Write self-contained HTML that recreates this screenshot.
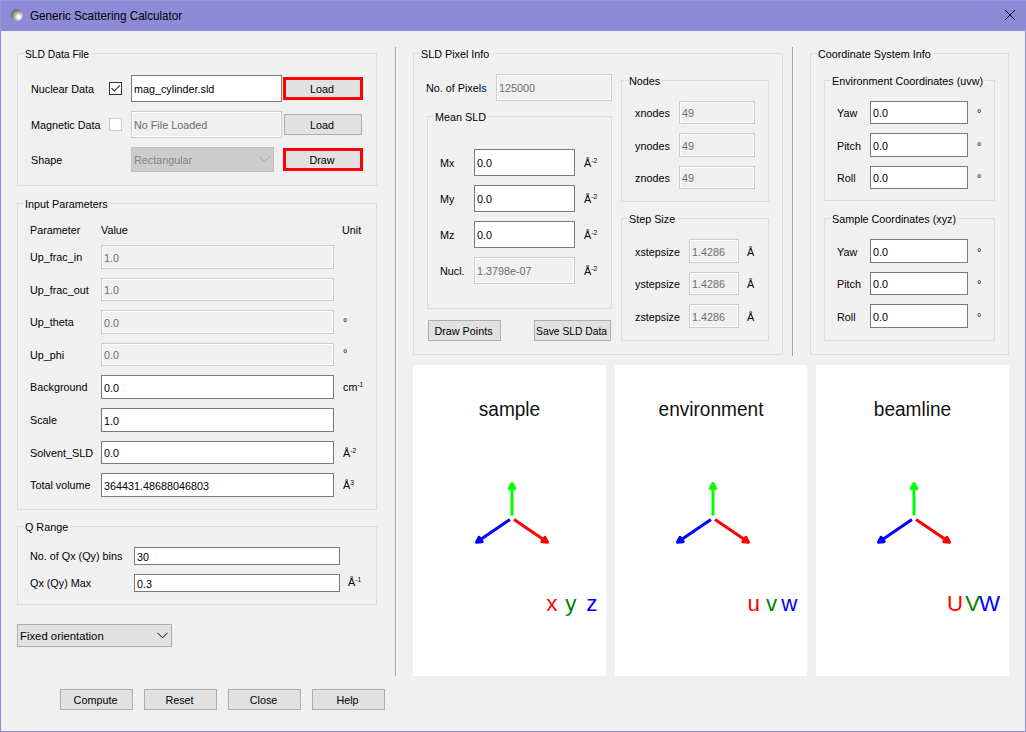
<!DOCTYPE html>
<html><head><meta charset="utf-8"><title>Generic Scattering Calculator</title>
<style>
html,body{margin:0;padding:0;}
body{width:1026px;height:732px;position:relative;overflow:hidden;background:#f0f0f0;font-family:"Liberation Sans",sans-serif;}
.r{position:absolute;box-sizing:border-box;}
.t{position:absolute;white-space:nowrap;line-height:1;}
.gt{background:#f0f0f0;padding:0 2px 0 1px;}
.sup{font-size:0.62em;vertical-align:0.55em;}
</style></head><body>
<div class="r" style="left:0;top:0;width:1026px;height:31px;background:#8d8bd8"></div>
<div class="r" style="left:0;top:0;width:1026px;height:1px;background:#9896d9"></div>
<div class="r" style="left:0;top:0;width:1px;height:31px;background:#9896d9"></div>
<div class="r" style="left:0;top:31px;width:1px;height:701px;background:#8e8cd8"></div>
<div class="r" style="left:1025px;top:31px;width:1px;height:701px;background:#8e8cd8"></div>
<div class="r" style="left:0;top:731px;width:1026px;height:1px;background:#8e8cd8"></div>
<div class="r" style="left:11px;top:9px;width:12px;height:12px;border-radius:50%;background:radial-gradient(circle at 66% 66%, #fff 0, #f8f8f8 14%, #9a9a9a 48%, #5a5a5a 80%, #3a3a3a 100%)"></div>
<div class="t" style="left:30px;top:10.23px;font-size:12.6px;color:#000;transform:scaleX(0.925);transform-origin:0 0;">Generic Scattering Calculator</div>
<svg class="r" style="left:1004px;top:9px" width="12" height="12"><path d="M1,1 L11,11 M11,1 L1,11" stroke="#000" stroke-width="1"/></svg>
<div class="r" style="left:17px;top:53px;width:360px;height:133px;border:1px solid #dcdcdc;"></div>
<div class="t gt" style="left:24px;top:48.82px;font-size:11.2px;transform:scaleX(0.9206);transform-origin:0 0;">&#8203;SLD Data File</div>
<div class="t" style="left:30.5px;top:83.52px;font-size:11.2px;color:#000;transform:scaleX(0.964);transform-origin:0 0;">Nuclear Data</div>
<div class="r" style="left:109px;top:82px;width:13px;height:13px;background:#fff;border:1px solid #333333;"></div>
<svg class="r" style="left:109px;top:82px" width="13" height="13"><polyline points="2.5,6.2 5.3,9 10.8,3.4" fill="none" stroke="#222" stroke-width="1.05"/></svg>
<div class="r" style="left:131px;top:75px;width:151px;height:27px;background:#fff;border:1px solid #7a7a7a;"></div>
<div class="t" style="left:133.5px;top:84.22px;font-size:11.2px;color:#000;transform:scaleX(0.964);transform-origin:0 0;">mag_cylinder.sld</div>
<div class="r" style="left:283px;top:77px;width:80px;height:23px;background:#e1e1e1;border:3px solid #ff0000;"></div>
<div class="t" style="left:281.5px;width:80px;text-align:center;top:84.22px;font-size:11.2px;transform:scaleX(0.9640);">Load</div>
<div class="t" style="left:30.5px;top:119.52px;font-size:11.2px;color:#000;transform:scaleX(0.964);transform-origin:0 0;">Magnetic Data</div>
<div class="r" style="left:109px;top:118px;width:13px;height:13px;background:#fff;border:1px solid #cccccc;"></div>
<div class="r" style="left:131px;top:111px;width:151px;height:27px;background:#f0f0f0;border:1px solid #cccccc;box-shadow:inset 0 0 0 1px #fff;"></div>
<div class="t" style="left:133.5px;top:120.22px;font-size:11.2px;color:#6d6d6d;transform:scaleX(0.964);transform-origin:0 0;">No File Loaded</div>
<div class="r" style="left:284px;top:114px;width:78px;height:21px;background:#e1e1e1;border:1px solid #adadad;"></div>
<div class="t" style="left:282.5px;width:78px;text-align:center;top:120.22px;font-size:11.2px;transform:scaleX(0.9640);">Load</div>
<div class="t" style="left:30.5px;top:154.52px;font-size:11.2px;color:#000;transform:scaleX(0.964);transform-origin:0 0;">Shape</div>
<div class="r" style="left:131px;top:147px;width:143px;height:25px;background:#cccccc;border:1px solid #bfbfbf;"></div>
<div class="t" style="left:134px;top:155.22px;font-size:11.2px;color:#838383;transform:scaleX(0.9640);transform-origin:0 0;">Rectangular</div>
<svg class="r" style="left:258.5px;top:156.0px" width="11" height="7"><polyline points="0.5,0.8 5.5,5.8 10.5,0.8" fill="none" stroke="#a0a0a0" stroke-width="1"/></svg>
<div class="r" style="left:283px;top:148px;width:80px;height:23px;background:#e1e1e1;border:3px solid #ff0000;"></div>
<div class="t" style="left:281.5px;width:80px;text-align:center;top:155.22px;font-size:11.2px;transform:scaleX(0.9640);">Draw</div>
<div class="r" style="left:17px;top:203px;width:360px;height:307px;border:1px solid #dcdcdc;"></div>
<div class="t gt" style="left:24px;top:198.82px;font-size:11.2px;transform:scaleX(0.9640);transform-origin:0 0;">&#8203;Input Parameters</div>
<div class="t" style="left:30px;top:224.52px;font-size:11.2px;color:#000;transform:scaleX(0.964);transform-origin:0 0;">Parameter</div>
<div class="t" style="left:101px;top:224.52px;font-size:11.2px;color:#000;transform:scaleX(0.964);transform-origin:0 0;">Value</div>
<div class="t" style="left:342px;top:224.52px;font-size:11.2px;color:#000;transform:scaleX(0.964);transform-origin:0 0;">Unit</div>
<div class="t" style="left:30px;top:252.32px;font-size:11.2px;color:#000;transform:scaleX(0.964);transform-origin:0 0;">Up_frac_in</div>
<div class="r" style="left:101px;top:245px;width:233px;height:24px;background:#f0f0f0;border:1px solid #cccccc;box-shadow:inset 0 0 0 1px #fff;"></div>
<div class="t" style="left:103.5px;top:252.72px;font-size:11.2px;color:#6d6d6d;transform:scaleX(0.964);transform-origin:0 0;">1.0</div>
<div class="t" style="left:30px;top:284.82px;font-size:11.2px;color:#000;transform:scaleX(0.964);transform-origin:0 0;">Up_frac_out</div>
<div class="r" style="left:101px;top:278px;width:233px;height:23px;background:#f0f0f0;border:1px solid #cccccc;box-shadow:inset 0 0 0 1px #fff;"></div>
<div class="t" style="left:103.5px;top:285.22px;font-size:11.2px;color:#6d6d6d;transform:scaleX(0.964);transform-origin:0 0;">1.0</div>
<div class="t" style="left:30px;top:317.32px;font-size:11.2px;color:#000;transform:scaleX(0.964);transform-origin:0 0;">Up_theta</div>
<div class="r" style="left:101px;top:310px;width:233px;height:24px;background:#f0f0f0;border:1px solid #cccccc;box-shadow:inset 0 0 0 1px #fff;"></div>
<div class="t" style="left:103.5px;top:317.72px;font-size:11.2px;color:#6d6d6d;transform:scaleX(0.964);transform-origin:0 0;">0.0</div>
<div class="t" style="left:343px;top:317.32px;font-size:11.2px;color:#000;transform:scaleX(0.964);transform-origin:0 0;">°</div>
<div class="t" style="left:30px;top:349.82px;font-size:11.2px;color:#000;transform:scaleX(0.964);transform-origin:0 0;">Up_phi</div>
<div class="r" style="left:101px;top:343px;width:233px;height:23px;background:#f0f0f0;border:1px solid #cccccc;box-shadow:inset 0 0 0 1px #fff;"></div>
<div class="t" style="left:103.5px;top:350.22px;font-size:11.2px;color:#6d6d6d;transform:scaleX(0.964);transform-origin:0 0;">0.0</div>
<div class="t" style="left:343px;top:347.82px;font-size:11.2px;color:#000;transform:scaleX(0.964);transform-origin:0 0;">°</div>
<div class="t" style="left:30px;top:382.32px;font-size:11.2px;color:#000;transform:scaleX(0.964);transform-origin:0 0;">Background</div>
<div class="r" style="left:101px;top:375px;width:233px;height:24px;background:#fff;border:1px solid #7a7a7a;"></div>
<div class="t" style="left:103.5px;top:382.72px;font-size:11.2px;color:#000;transform:scaleX(0.964);transform-origin:0 0;">0.0</div>
<div class="t" style="left:343px;top:382.32px;font-size:11.2px;transform:scaleX(0.964);transform-origin:0 0;">cm<span class="sup">-1</span></div>
<div class="t" style="left:30px;top:415.32px;font-size:11.2px;color:#000;transform:scaleX(0.964);transform-origin:0 0;">Scale</div>
<div class="r" style="left:101px;top:408px;width:233px;height:24px;background:#fff;border:1px solid #7a7a7a;"></div>
<div class="t" style="left:103.5px;top:415.72px;font-size:11.2px;color:#000;transform:scaleX(0.964);transform-origin:0 0;">1.0</div>
<div class="t" style="left:30px;top:447.82px;font-size:11.2px;color:#000;transform:scaleX(0.964);transform-origin:0 0;">Solvent_SLD</div>
<div class="r" style="left:101px;top:441px;width:233px;height:23px;background:#fff;border:1px solid #7a7a7a;"></div>
<div class="t" style="left:103.5px;top:448.22px;font-size:11.2px;color:#000;transform:scaleX(0.964);transform-origin:0 0;">0.0</div>
<div class="t" style="left:343px;top:447.82px;font-size:11.2px;transform:scaleX(0.964);transform-origin:0 0;">Å<span class="sup">-2</span></div>
<div class="t" style="left:30px;top:480.32px;font-size:11.2px;color:#000;transform:scaleX(0.964);transform-origin:0 0;">Total volume</div>
<div class="r" style="left:101px;top:473px;width:233px;height:24px;background:#fff;border:1px solid #7a7a7a;"></div>
<div class="t" style="left:103.5px;top:480.72px;font-size:11.2px;color:#000;transform:scaleX(0.964);transform-origin:0 0;">364431.48688046803</div>
<div class="t" style="left:343px;top:480.32px;font-size:11.2px;transform:scaleX(0.964);transform-origin:0 0;">Å<span class="sup">3</span></div>
<div class="r" style="left:17px;top:526px;width:360px;height:79px;border:1px solid #dcdcdc;"></div>
<div class="t gt" style="left:24px;top:521.82px;font-size:11.2px;transform:scaleX(0.9640);transform-origin:0 0;">&#8203;Q Range</div>
<div class="t" style="left:30.3px;top:551.22px;font-size:11.2px;color:#000;transform:scaleX(0.964);transform-origin:0 0;">No. of Qx (Qy) bins</div>
<div class="r" style="left:134px;top:547px;width:206px;height:18px;background:#fff;border:1px solid #7a7a7a;"></div>
<div class="t" style="left:136.5px;top:551.72px;font-size:11.2px;color:#000;transform:scaleX(0.964);transform-origin:0 0;">30</div>
<div class="t" style="left:30.3px;top:578.22px;font-size:11.2px;color:#000;transform:scaleX(0.964);transform-origin:0 0;">Qx (Qy) Max</div>
<div class="r" style="left:134px;top:574px;width:206px;height:18px;background:#fff;border:1px solid #7a7a7a;"></div>
<div class="t" style="left:136.5px;top:578.72px;font-size:11.2px;color:#000;transform:scaleX(0.964);transform-origin:0 0;">0.3</div>
<div class="t" style="left:348px;top:576.52px;font-size:11.2px;transform:scaleX(0.964);transform-origin:0 0;">Å<span class="sup">-1</span></div>
<div class="r" style="left:17px;top:624px;width:155px;height:23px;background:#e1e1e1;border:1px solid #adadad;"></div>
<div class="t" style="left:20px;top:631.22px;font-size:11.2px;color:#000;transform:scaleX(1.0122);transform-origin:0 0;">Fixed orientation</div>
<svg class="r" style="left:156.5px;top:632.0px" width="11" height="7"><polyline points="0.5,0.8 5.5,5.8 10.5,0.8" fill="none" stroke="#000" stroke-width="1"/></svg>
<div class="r" style="left:60px;top:689px;width:73px;height:21px;background:#e1e1e1;border:1px solid #adadad;"></div>
<div class="t" style="left:58.5px;width:73px;text-align:center;top:695.22px;font-size:11.2px;transform:scaleX(0.9640);">Compute</div>
<div class="r" style="left:144px;top:689px;width:73px;height:21px;background:#e1e1e1;border:1px solid #adadad;"></div>
<div class="t" style="left:142.5px;width:73px;text-align:center;top:695.22px;font-size:11.2px;transform:scaleX(0.9640);">Reset</div>
<div class="r" style="left:228px;top:689px;width:73px;height:21px;background:#e1e1e1;border:1px solid #adadad;"></div>
<div class="t" style="left:226.5px;width:73px;text-align:center;top:695.22px;font-size:11.2px;transform:scaleX(0.9640);">Close</div>
<div class="r" style="left:312px;top:689px;width:73px;height:21px;background:#e1e1e1;border:1px solid #adadad;"></div>
<div class="t" style="left:310.5px;width:73px;text-align:center;top:695.22px;font-size:11.2px;transform:scaleX(0.9640);">Help</div>
<div class="r" style="left:395px;top:47px;width:1px;height:629px;background:#a0a0a0;"></div>
<div class="r" style="left:396px;top:48px;width:1px;height:628px;background:#ffffff;"></div>
<div class="r" style="left:792px;top:47px;width:1px;height:309px;background:#a0a0a0;"></div>
<div class="r" style="left:793px;top:48px;width:1px;height:308px;background:#ffffff;"></div>
<div class="r" style="left:413px;top:53px;width:370px;height:302px;border:1px solid #dcdcdc;"></div>
<div class="t gt" style="left:420px;top:48.82px;font-size:11.2px;transform:scaleX(0.9640);transform-origin:0 0;">&#8203;SLD Pixel Info</div>
<div class="t" style="left:426px;top:82.52px;font-size:11.2px;color:#000;transform:scaleX(0.964);transform-origin:0 0;">No. of Pixels</div>
<div class="r" style="left:496px;top:74px;width:116px;height:27px;background:#f0f0f0;border:1px solid #cccccc;box-shadow:inset 0 0 0 1px #fff;"></div>
<div class="t" style="left:498.5px;top:83.22px;font-size:11.2px;color:#6d6d6d;transform:scaleX(0.964);transform-origin:0 0;">125000</div>
<div class="r" style="left:427px;top:116px;width:185px;height:193px;border:1px solid #dcdcdc;"></div>
<div class="t gt" style="left:434px;top:111.82px;font-size:11.2px;transform:scaleX(0.9640);transform-origin:0 0;">&#8203;Mean SLD</div>
<div class="t" style="left:440px;top:158.02px;font-size:11.2px;color:#000;transform:scaleX(0.964);transform-origin:0 0;">Mx</div>
<div class="r" style="left:474px;top:149px;width:101px;height:27px;background:#fff;border:1px solid #7a7a7a;"></div>
<div class="t" style="left:476.5px;top:158.22px;font-size:11.2px;color:#000;transform:scaleX(0.964);transform-origin:0 0;">0.0</div>
<div class="t" style="left:584px;top:158.02px;font-size:11.2px;transform:scaleX(0.964);transform-origin:0 0;">Å<span class="sup">-2</span></div>
<div class="t" style="left:440px;top:194.02px;font-size:11.2px;color:#000;transform:scaleX(0.964);transform-origin:0 0;">My</div>
<div class="r" style="left:474px;top:185px;width:101px;height:27px;background:#fff;border:1px solid #7a7a7a;"></div>
<div class="t" style="left:476.5px;top:194.22px;font-size:11.2px;color:#000;transform:scaleX(0.964);transform-origin:0 0;">0.0</div>
<div class="t" style="left:584px;top:194.02px;font-size:11.2px;transform:scaleX(0.964);transform-origin:0 0;">Å<span class="sup">-2</span></div>
<div class="t" style="left:440px;top:230.02px;font-size:11.2px;color:#000;transform:scaleX(0.964);transform-origin:0 0;">Mz</div>
<div class="r" style="left:474px;top:221px;width:101px;height:27px;background:#fff;border:1px solid #7a7a7a;"></div>
<div class="t" style="left:476.5px;top:230.22px;font-size:11.2px;color:#000;transform:scaleX(0.964);transform-origin:0 0;">0.0</div>
<div class="t" style="left:584px;top:230.02px;font-size:11.2px;transform:scaleX(0.964);transform-origin:0 0;">Å<span class="sup">-2</span></div>
<div class="t" style="left:440px;top:266.02px;font-size:11.2px;color:#000;transform:scaleX(0.964);transform-origin:0 0;">Nucl.</div>
<div class="r" style="left:474px;top:257px;width:101px;height:27px;background:#f0f0f0;border:1px solid #cccccc;box-shadow:inset 0 0 0 1px #fff;"></div>
<div class="t" style="left:476.5px;top:266.22px;font-size:11.2px;color:#6d6d6d;transform:scaleX(0.964);transform-origin:0 0;">1.3798e-07</div>
<div class="t" style="left:584px;top:266.02px;font-size:11.2px;transform:scaleX(0.964);transform-origin:0 0;">Å<span class="sup">-2</span></div>
<div class="r" style="left:428px;top:320px;width:73px;height:21px;background:#e1e1e1;border:1px solid #adadad;"></div>
<div class="t" style="left:426.5px;width:73px;text-align:center;top:326.22px;font-size:11.2px;transform:scaleX(0.9640);">Draw Points</div>
<div class="r" style="left:534px;top:320px;width:77px;height:21px;background:#e1e1e1;border:1px solid #adadad;"></div>
<div class="t" style="left:532.5px;width:77px;text-align:center;top:326.22px;font-size:11.2px;transform:scaleX(0.9206);">Save SLD Data</div>
<div class="r" style="left:621px;top:80px;width:148px;height:122px;border:1px solid #dcdcdc;"></div>
<div class="t gt" style="left:628px;top:75.82px;font-size:11.2px;transform:scaleX(0.9640);transform-origin:0 0;">&#8203;Nodes</div>
<div class="t" style="left:635px;top:108.02px;font-size:11.2px;color:#000;transform:scaleX(0.964);transform-origin:0 0;">xnodes</div>
<div class="r" style="left:679px;top:101px;width:76px;height:23px;background:#f0f0f0;border:1px solid #cccccc;box-shadow:inset 0 0 0 1px #fff;"></div>
<div class="t" style="left:681.5px;top:108.22px;font-size:11.2px;color:#6d6d6d;transform:scaleX(0.964);transform-origin:0 0;">49</div>
<div class="t" style="left:635px;top:140.52px;font-size:11.2px;color:#000;transform:scaleX(0.964);transform-origin:0 0;">ynodes</div>
<div class="r" style="left:679px;top:133px;width:76px;height:24px;background:#f0f0f0;border:1px solid #cccccc;box-shadow:inset 0 0 0 1px #fff;"></div>
<div class="t" style="left:681.5px;top:140.72px;font-size:11.2px;color:#6d6d6d;transform:scaleX(0.964);transform-origin:0 0;">49</div>
<div class="t" style="left:635px;top:173.02px;font-size:11.2px;color:#000;transform:scaleX(0.964);transform-origin:0 0;">znodes</div>
<div class="r" style="left:679px;top:166px;width:76px;height:23px;background:#f0f0f0;border:1px solid #cccccc;box-shadow:inset 0 0 0 1px #fff;"></div>
<div class="t" style="left:681.5px;top:173.22px;font-size:11.2px;color:#6d6d6d;transform:scaleX(0.964);transform-origin:0 0;">49</div>
<div class="r" style="left:621px;top:218px;width:148px;height:123px;border:1px solid #dcdcdc;"></div>
<div class="t gt" style="left:628px;top:213.82px;font-size:11.2px;transform:scaleX(0.9640);transform-origin:0 0;">&#8203;Step Size</div>
<div class="t" style="left:635px;top:246.52px;font-size:11.2px;color:#000;transform:scaleX(0.964);transform-origin:0 0;">xstepsize</div>
<div class="r" style="left:689px;top:239px;width:50px;height:24px;background:#f0f0f0;border:1px solid #cccccc;box-shadow:inset 0 0 0 1px #fff;"></div>
<div class="t" style="left:691.5px;top:246.72px;font-size:11.2px;color:#6d6d6d;transform:scaleX(0.964);transform-origin:0 0;">1.4286</div>
<div class="t" style="left:747px;top:246.52px;font-size:11.2px;color:#000;transform:scaleX(0.964);transform-origin:0 0;">Å</div>
<div class="t" style="left:635px;top:279.02px;font-size:11.2px;color:#000;transform:scaleX(0.964);transform-origin:0 0;">ystepsize</div>
<div class="r" style="left:689px;top:272px;width:50px;height:23px;background:#f0f0f0;border:1px solid #cccccc;box-shadow:inset 0 0 0 1px #fff;"></div>
<div class="t" style="left:691.5px;top:279.22px;font-size:11.2px;color:#6d6d6d;transform:scaleX(0.964);transform-origin:0 0;">1.4286</div>
<div class="t" style="left:747px;top:279.02px;font-size:11.2px;color:#000;transform:scaleX(0.964);transform-origin:0 0;">Å</div>
<div class="t" style="left:635px;top:311.52px;font-size:11.2px;color:#000;transform:scaleX(0.964);transform-origin:0 0;">zstepsize</div>
<div class="r" style="left:689px;top:304px;width:50px;height:24px;background:#f0f0f0;border:1px solid #cccccc;box-shadow:inset 0 0 0 1px #fff;"></div>
<div class="t" style="left:691.5px;top:311.72px;font-size:11.2px;color:#6d6d6d;transform:scaleX(0.964);transform-origin:0 0;">1.4286</div>
<div class="t" style="left:747px;top:311.52px;font-size:11.2px;color:#000;transform:scaleX(0.964);transform-origin:0 0;">Å</div>
<div class="r" style="left:810px;top:53px;width:199px;height:302px;border:1px solid #dcdcdc;"></div>
<div class="t gt" style="left:817px;top:48.82px;font-size:11.2px;transform:scaleX(0.9640);transform-origin:0 0;">&#8203;Coordinate System Info</div>
<div class="r" style="left:824px;top:80px;width:171px;height:121px;border:1px solid #dcdcdc;"></div>
<div class="t gt" style="left:831px;top:75.82px;font-size:11.2px;transform:scaleX(0.9640);transform-origin:0 0;">&#8203;Environment Coordinates (uvw)</div>
<div class="t" style="left:837px;top:108.02px;font-size:11.2px;color:#000;transform:scaleX(0.964);transform-origin:0 0;">Yaw</div>
<div class="r" style="left:870px;top:101px;width:98px;height:23px;background:#fff;border:1px solid #7a7a7a;"></div>
<div class="t" style="left:872.5px;top:108.22px;font-size:11.2px;color:#000;transform:scaleX(0.964);transform-origin:0 0;">0.0</div>
<div class="t" style="left:977px;top:108.02px;font-size:11.2px;color:#000;transform:scaleX(0.964);transform-origin:0 0;">°</div>
<div class="t" style="left:837px;top:140.52px;font-size:11.2px;color:#000;transform:scaleX(0.964);transform-origin:0 0;">Pitch</div>
<div class="r" style="left:870px;top:133px;width:98px;height:24px;background:#fff;border:1px solid #7a7a7a;"></div>
<div class="t" style="left:872.5px;top:140.72px;font-size:11.2px;color:#000;transform:scaleX(0.964);transform-origin:0 0;">0.0</div>
<div class="t" style="left:977px;top:140.52px;font-size:11.2px;color:#000;transform:scaleX(0.964);transform-origin:0 0;">°</div>
<div class="t" style="left:837px;top:173.02px;font-size:11.2px;color:#000;transform:scaleX(0.964);transform-origin:0 0;">Roll</div>
<div class="r" style="left:870px;top:166px;width:98px;height:23px;background:#fff;border:1px solid #7a7a7a;"></div>
<div class="t" style="left:872.5px;top:173.22px;font-size:11.2px;color:#000;transform:scaleX(0.964);transform-origin:0 0;">0.0</div>
<div class="t" style="left:977px;top:173.02px;font-size:11.2px;color:#000;transform:scaleX(0.964);transform-origin:0 0;">°</div>
<div class="r" style="left:824px;top:218px;width:171px;height:123px;border:1px solid #dcdcdc;"></div>
<div class="t gt" style="left:831px;top:213.82px;font-size:11.2px;transform:scaleX(0.9640);transform-origin:0 0;">&#8203;Sample Coordinates (xyz)</div>
<div class="t" style="left:837px;top:246.52px;font-size:11.2px;color:#000;transform:scaleX(0.964);transform-origin:0 0;">Yaw</div>
<div class="r" style="left:870px;top:239px;width:98px;height:24px;background:#fff;border:1px solid #7a7a7a;"></div>
<div class="t" style="left:872.5px;top:246.72px;font-size:11.2px;color:#000;transform:scaleX(0.964);transform-origin:0 0;">0.0</div>
<div class="t" style="left:977px;top:246.52px;font-size:11.2px;color:#000;transform:scaleX(0.964);transform-origin:0 0;">°</div>
<div class="t" style="left:837px;top:279.02px;font-size:11.2px;color:#000;transform:scaleX(0.964);transform-origin:0 0;">Pitch</div>
<div class="r" style="left:870px;top:272px;width:98px;height:23px;background:#fff;border:1px solid #7a7a7a;"></div>
<div class="t" style="left:872.5px;top:279.22px;font-size:11.2px;color:#000;transform:scaleX(0.964);transform-origin:0 0;">0.0</div>
<div class="t" style="left:977px;top:279.02px;font-size:11.2px;color:#000;transform:scaleX(0.964);transform-origin:0 0;">°</div>
<div class="t" style="left:837px;top:311.52px;font-size:11.2px;color:#000;transform:scaleX(0.964);transform-origin:0 0;">Roll</div>
<div class="r" style="left:870px;top:304px;width:98px;height:24px;background:#fff;border:1px solid #7a7a7a;"></div>
<div class="t" style="left:872.5px;top:311.72px;font-size:11.2px;color:#000;transform:scaleX(0.964);transform-origin:0 0;">0.0</div>
<div class="t" style="left:977px;top:311.52px;font-size:11.2px;color:#000;transform:scaleX(0.964);transform-origin:0 0;">°</div>
<div class="r" style="left:413px;top:365px;width:193px;height:311px;background:#fff;"></div>
<div class="t" style="left:413px;width:193px;text-align:center;top:399.37px;font-size:20px;color:#111;transform:scaleX(0.953);">sample</div>
<svg class="r" style="left:462px;top:468px" width="100" height="100" viewBox="-50 -50 100 100"><g transform="rotate(-90.00)"><line x1="2.5" y1="0" x2="30.5" y2="0" stroke="#00ff00" stroke-width="3"/><polygon points="34.5,0 29.5,-2.7 29.5,2.7" fill="#00ff00" stroke="#00ff00" stroke-width="3" stroke-linejoin="round"/></g><g transform="rotate(145.60)"><line x1="2.5" y1="0" x2="39" y2="0" stroke="#0000ff" stroke-width="3"/><polygon points="43,0 38,-2.7 38,2.7" fill="#0000ff" stroke="#0000ff" stroke-width="3" stroke-linejoin="round"/></g><g transform="rotate(34.40)"><line x1="2.5" y1="0" x2="39" y2="0" stroke="#ff0000" stroke-width="3"/><polygon points="43,0 38,-2.7 38,2.7" fill="#ff0000" stroke="#ff0000" stroke-width="3" stroke-linejoin="round"/></g></svg>
<div class="t" style="left:546.2px;top:592.52px;font-size:22.3px;color:#ff0000">x</div>
<div class="t" style="left:565.3px;top:592.52px;font-size:22.3px;color:#008000">y</div>
<div class="t" style="left:586.2px;top:592.52px;font-size:22.3px;color:#0000ff">z</div>
<div class="r" style="left:615px;top:365px;width:192px;height:311px;background:#fff;"></div>
<div class="t" style="left:615px;width:192px;text-align:center;top:399.37px;font-size:20px;color:#111;transform:scaleX(0.953);">environment</div>
<svg class="r" style="left:663px;top:468px" width="100" height="100" viewBox="-50 -50 100 100"><g transform="rotate(-90.00)"><line x1="2.5" y1="0" x2="30.5" y2="0" stroke="#00ff00" stroke-width="3"/><polygon points="34.5,0 29.5,-2.7 29.5,2.7" fill="#00ff00" stroke="#00ff00" stroke-width="3" stroke-linejoin="round"/></g><g transform="rotate(145.60)"><line x1="2.5" y1="0" x2="39" y2="0" stroke="#0000ff" stroke-width="3"/><polygon points="43,0 38,-2.7 38,2.7" fill="#0000ff" stroke="#0000ff" stroke-width="3" stroke-linejoin="round"/></g><g transform="rotate(34.40)"><line x1="2.5" y1="0" x2="39" y2="0" stroke="#ff0000" stroke-width="3"/><polygon points="43,0 38,-2.7 38,2.7" fill="#ff0000" stroke="#ff0000" stroke-width="3" stroke-linejoin="round"/></g></svg>
<div class="t" style="left:747.6px;top:592.52px;font-size:22.3px;color:#ff0000">u</div>
<div class="t" style="left:766.0px;top:592.52px;font-size:22.3px;color:#008000">v</div>
<div class="t" style="left:781.2px;top:592.52px;font-size:22.3px;color:#0000ff">w</div>
<div class="r" style="left:816px;top:365px;width:193px;height:311px;background:#fff;"></div>
<div class="t" style="left:816px;width:193px;text-align:center;top:399.37px;font-size:20px;color:#111;transform:scaleX(0.953);">beamline</div>
<svg class="r" style="left:864px;top:468px" width="100" height="100" viewBox="-50 -50 100 100"><g transform="rotate(-90.00)"><line x1="2.5" y1="0" x2="30.5" y2="0" stroke="#00ff00" stroke-width="3"/><polygon points="34.5,0 29.5,-2.7 29.5,2.7" fill="#00ff00" stroke="#00ff00" stroke-width="3" stroke-linejoin="round"/></g><g transform="rotate(145.60)"><line x1="2.5" y1="0" x2="39" y2="0" stroke="#0000ff" stroke-width="3"/><polygon points="43,0 38,-2.7 38,2.7" fill="#0000ff" stroke="#0000ff" stroke-width="3" stroke-linejoin="round"/></g><g transform="rotate(34.40)"><line x1="2.5" y1="0" x2="39" y2="0" stroke="#ff0000" stroke-width="3"/><polygon points="43,0 38,-2.7 38,2.7" fill="#ff0000" stroke="#ff0000" stroke-width="3" stroke-linejoin="round"/></g></svg>
<div class="t" style="left:946.9px;top:592.52px;font-size:22.3px;color:#ff0000">U</div>
<div class="t" style="left:965.3px;top:592.52px;font-size:22.3px;color:#008000">V</div>
<div class="t" style="left:979.0px;top:592.52px;font-size:22.3px;color:#0000ff">W</div>
</body></html>
